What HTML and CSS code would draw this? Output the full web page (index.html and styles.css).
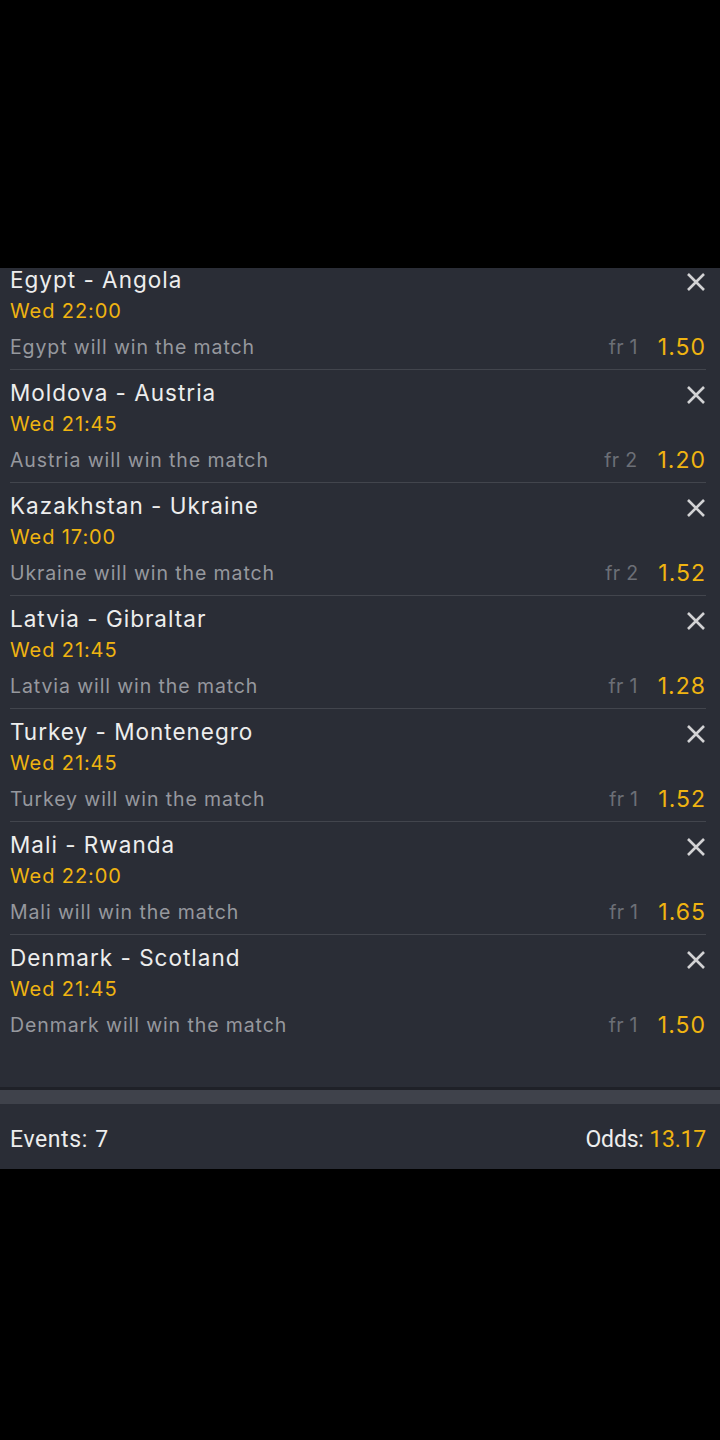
FILE: index.html
```html
<!DOCTYPE html>
<html>
<head>
<meta charset="utf-8">
<link rel="stylesheet" href="styles.css">
</head>
<body>
<div class="top"></div>
<div class="panel">
  <div class="list">
    <div class="row first">
      <div class="line"><span class="title">Egypt - Angola</span><svg class="x" viewBox="0 0 20 20"><path d="M2 2L18 18M18 2L2 18"/></svg></div>
      <div class="time">Wed 22:00</div>
      <div class="line sel"><span class="pick">Egypt will win the match</span><span class="odds"><span class="fr">fr 1</span><span class="val">1.50</span></span></div>
    </div>
    <div class="row">
      <div class="line"><span class="title">Moldova - Austria</span><svg class="x" viewBox="0 0 20 20"><path d="M2 2L18 18M18 2L2 18"/></svg></div>
      <div class="time">Wed 21:45</div>
      <div class="line sel"><span class="pick">Austria will win the match</span><span class="odds"><span class="fr">fr 2</span><span class="val">1.20</span></span></div>
    </div>
    <div class="row">
      <div class="line"><span class="title">Kazakhstan - Ukraine</span><svg class="x" viewBox="0 0 20 20"><path d="M2 2L18 18M18 2L2 18"/></svg></div>
      <div class="time">Wed 17:00</div>
      <div class="line sel"><span class="pick">Ukraine will win the match</span><span class="odds"><span class="fr">fr 2</span><span class="val">1.52</span></span></div>
    </div>
    <div class="row">
      <div class="line"><span class="title">Latvia - Gibraltar</span><svg class="x" viewBox="0 0 20 20"><path d="M2 2L18 18M18 2L2 18"/></svg></div>
      <div class="time">Wed 21:45</div>
      <div class="line sel"><span class="pick">Latvia will win the match</span><span class="odds"><span class="fr">fr 1</span><span class="val">1.28</span></span></div>
    </div>
    <div class="row">
      <div class="line"><span class="title">Turkey - Montenegro</span><svg class="x" viewBox="0 0 20 20"><path d="M2 2L18 18M18 2L2 18"/></svg></div>
      <div class="time">Wed 21:45</div>
      <div class="line sel"><span class="pick">Turkey will win the match</span><span class="odds"><span class="fr">fr 1</span><span class="val">1.52</span></span></div>
    </div>
    <div class="row">
      <div class="line"><span class="title">Mali - Rwanda</span><svg class="x" viewBox="0 0 20 20"><path d="M2 2L18 18M18 2L2 18"/></svg></div>
      <div class="time">Wed 22:00</div>
      <div class="line sel"><span class="pick">Mali will win the match</span><span class="odds"><span class="fr">fr 1</span><span class="val">1.65</span></span></div>
    </div>
    <div class="row last">
      <div class="line"><span class="title">Denmark - Scotland</span><svg class="x" viewBox="0 0 20 20"><path d="M2 2L18 18M18 2L2 18"/></svg></div>
      <div class="time">Wed 21:45</div>
      <div class="line sel"><span class="pick">Denmark will win the match</span><span class="odds"><span class="fr">fr 1</span><span class="val">1.50</span></span></div>
    </div>
  </div>
  <div class="band"></div>
  <div class="footer">
    <span class="events">Events: 7</span>
    <span class="sum">Odds: <span class="total">13.17</span></span>
  </div>
</div>
</body>
</html>
```
FILE: styles.css
```css
html, body {
  margin: 0;
  padding: 0;
  background: #000;
  height: 1440px;
  overflow: hidden;
}
body {
  font-family: Inter, "Liberation Sans", sans-serif;
}
.top {
  height: 268px;
}
.panel {
  background: #2a2d36;
  height: 901px;
  overflow: hidden;
  display: flex;
  flex-direction: column;
}
.list {
  height: 819px;
  overflow: hidden;
  border-bottom: 3px solid #1f2128;
}
.row {
  margin: 0 14px 0 10px;
  padding: 6px 0 6px;
  border-bottom: 1px solid #42454d;
  height: 100px;
}
.row.first {
  margin-top: -11px;
}
.row.last {
  border-bottom: none;
}
.line {
  display: flex;
  align-items: center;
  justify-content: space-between;
  height: 32px;
}
.title {
  font-size: 22.5px;
  color: #ededed;
  letter-spacing: 1px;
}
.x {
  width: 20px;
  height: 20px;
  margin-top: 6px;
  stroke: #d2d2d4;
  stroke-width: 2.6;
  fill: none;
}
.time {
  height: 32px;
  line-height: 32px;
  font-size: 20px;
  color: #f0b411;
  letter-spacing: 0.9px;
}
.sel {
  margin-top: 4px;
}
.pick {
  font-size: 19.5px;
  color: #96989e;
  letter-spacing: 0.9px;
}
.odds {
  display: flex;
  align-items: center;
  gap: 20px;
}
.fr {
  font-size: 19.5px;
  color: #6c6f76;
  letter-spacing: 0.3px;
}
.val {
  font-size: 23px;
  color: #f0b411;
  letter-spacing: 1px;
}
.band {
  height: 14px;
  background: #3f424b;
}
.footer {
  flex: 1;
  display: flex;
  align-items: center;
  justify-content: space-between;
  padding: 6px 14px 0 10px;
  font-family: Roboto, "Liberation Sans", sans-serif;
  font-size: 23px;
  color: #ededed;
}
.events {
  letter-spacing: 0.6px;
  word-spacing: 1px;
}
.sum {
  letter-spacing: -0.2px;
}
.total {
  color: #f0b411;
}
```
